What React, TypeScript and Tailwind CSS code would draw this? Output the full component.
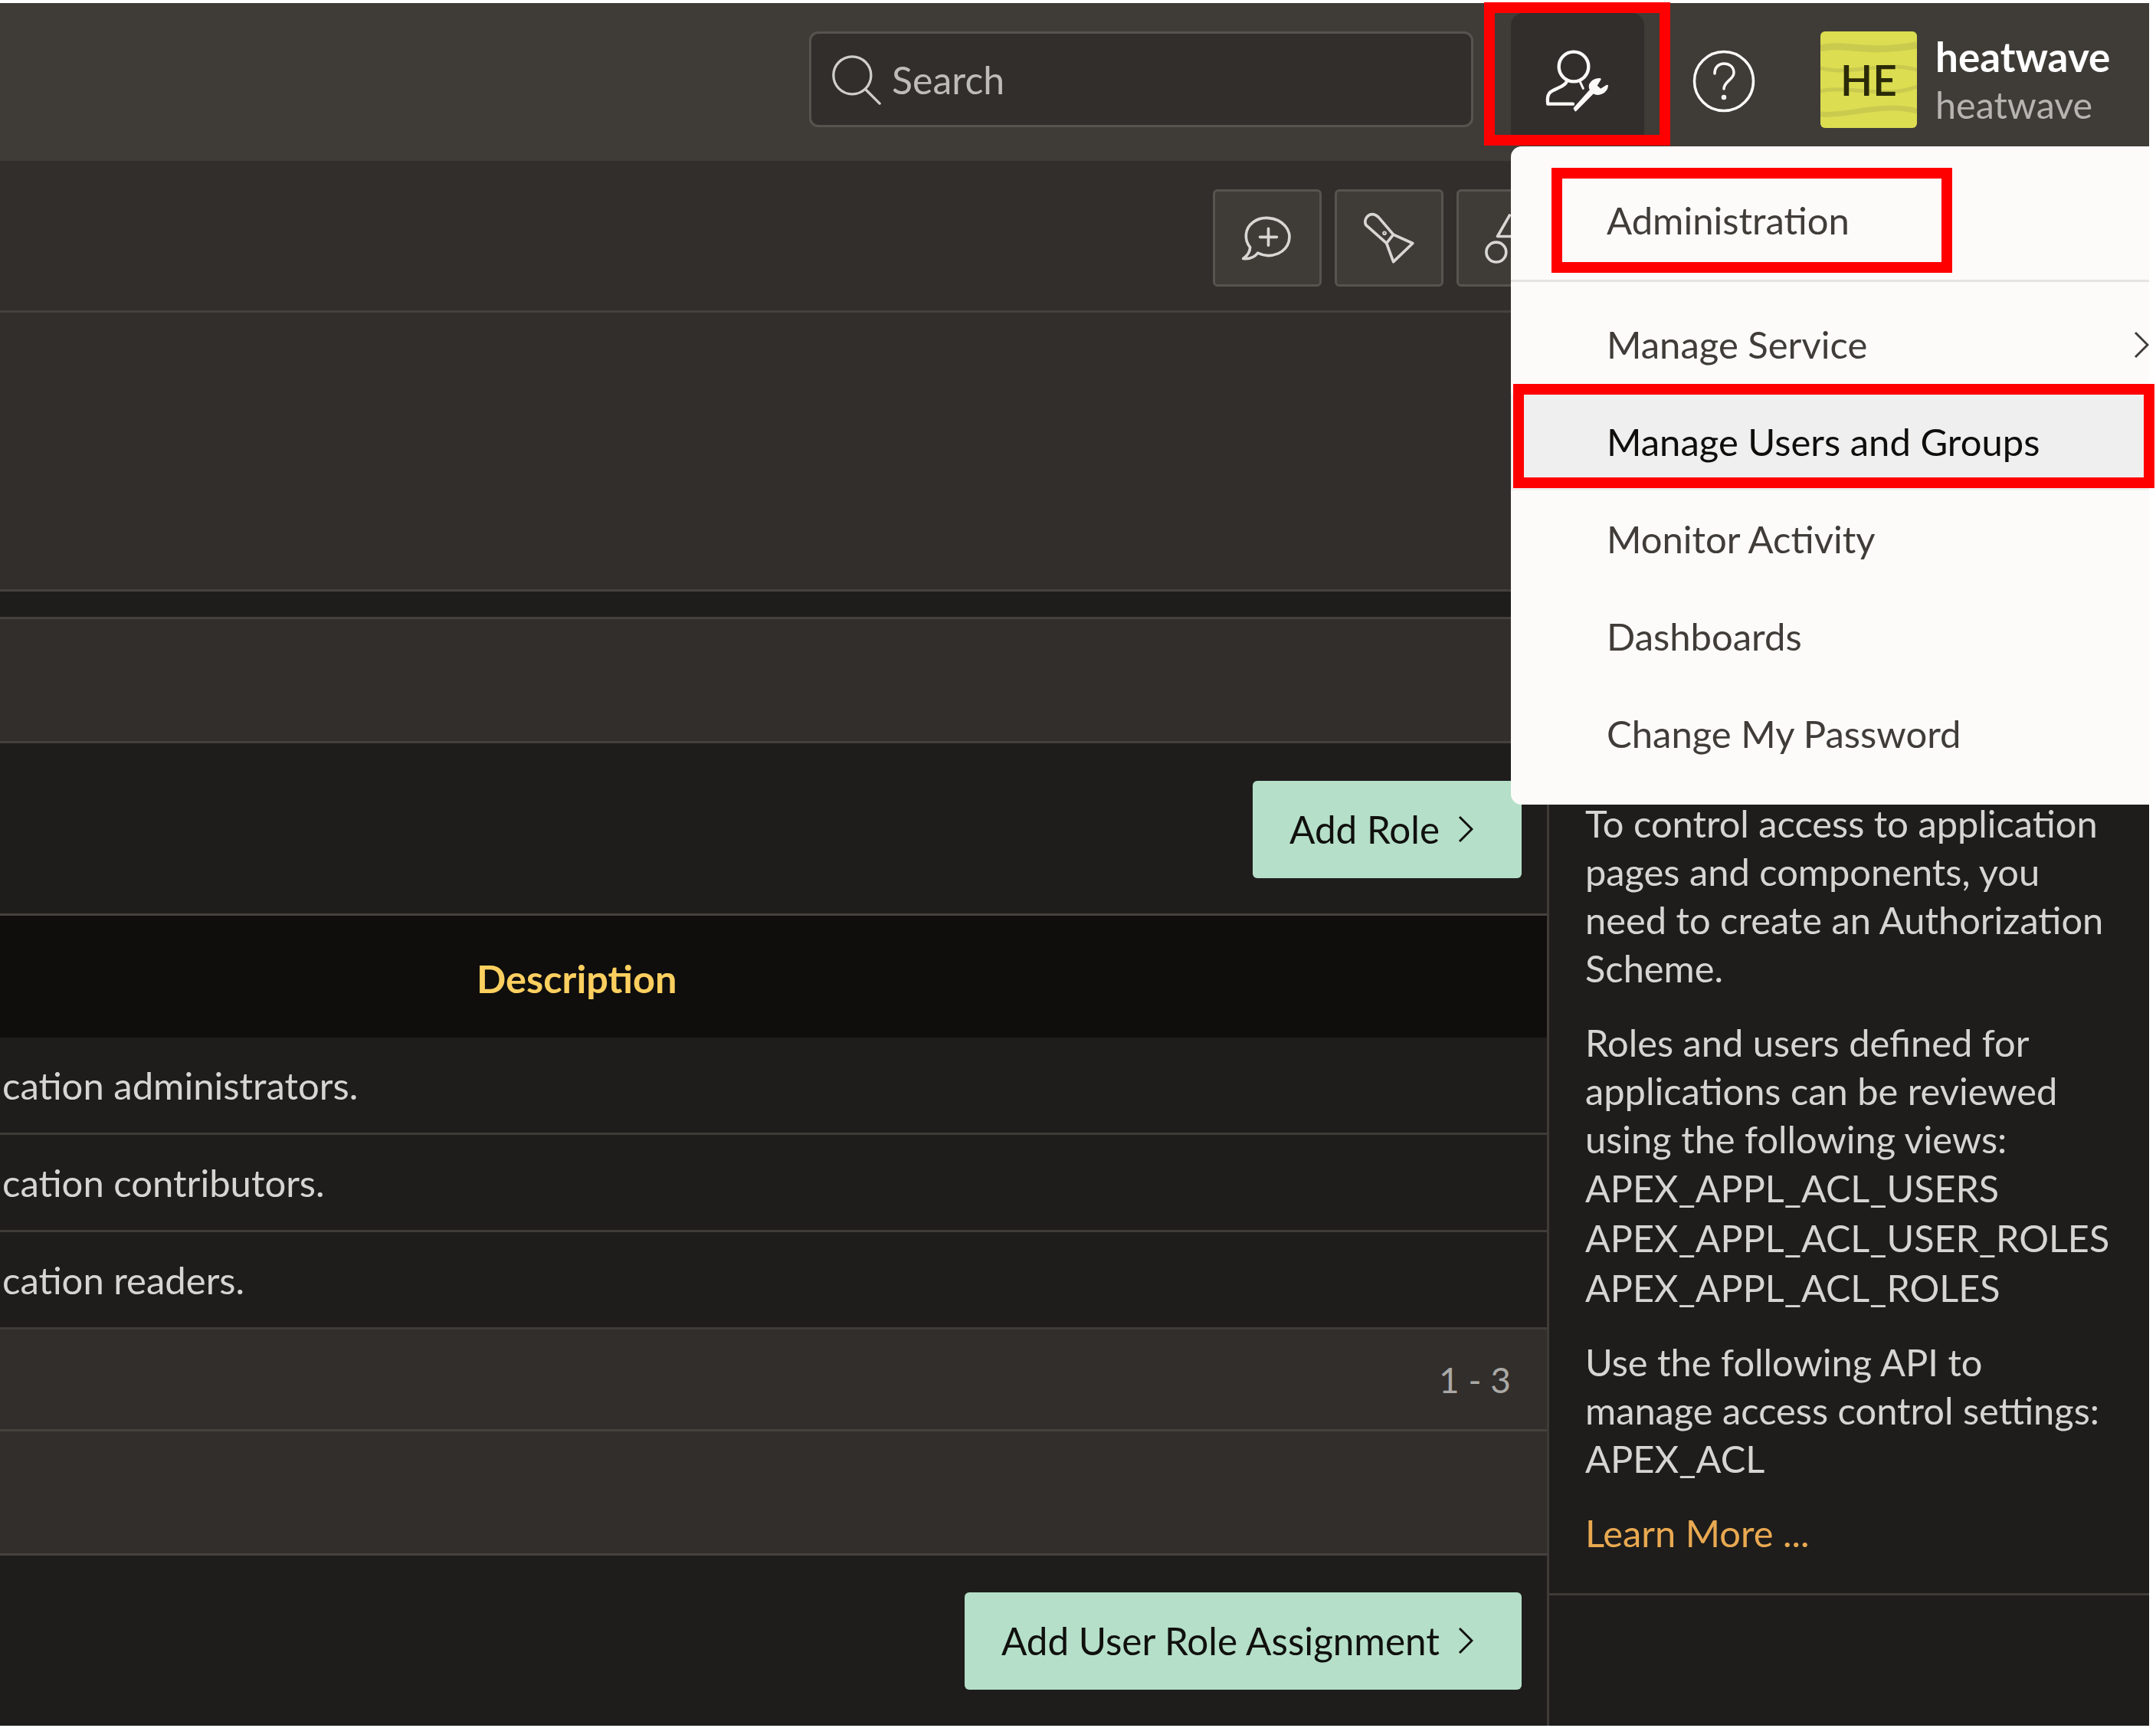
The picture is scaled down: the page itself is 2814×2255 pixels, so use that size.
const sans = "font-['Lato','Noto_Sans',sans-serif]";

function Chevron({ className }: { className: string }) {
  return (
    <svg viewBox="0 0 20 36" fill="none" stroke="currentColor" strokeWidth="3" className={className}>
      <path d="M2 2 L18 18 L2 34" />
    </svg>
  );
}

function UserWrench() {
  return (
    <svg viewBox="195 125 270 270" className="w-[90px] h-[90px]" fill="none" stroke="#fbfaf8" strokeWidth="13" strokeLinecap="round" strokeLinejoin="round">
      <circle cx="315" cy="197" r="58" />
      <path d="M288 254 C282 275 238 284 222 298 C212 308 212 330 214 343 L312 343" />
      <path d="M338 252 L352 282" strokeWidth="9" />
      <path d="M322 368 L392 298 C412 312 442 298 446 272 L420 288 L402 272 L418 246 C388 246 370 268 382 288 L318 360 Z" fill="#fbfaf8" strokeWidth="8" />
    </svg>
  );
}

function Avatar() {
  return (
    <div className="relative w-[126px] h-[126px] rounded-md overflow-hidden bg-[#dcdd51] flex items-center justify-center">
      <svg viewBox="0 0 126 126" className="absolute inset-0 w-full h-full" fill="none" stroke="#cacb4e" strokeWidth="9">
        <path d="M0 22 C30 14 60 30 126 18" />
        <path d="M0 48 C40 58 80 38 126 50" strokeWidth="5" />
        <path d="M0 78 C30 70 90 88 126 72" strokeWidth="5" />
        <path d="M0 108 C30 112 80 92 126 104" strokeWidth="7" />
      </svg>
      <span className="relative text-[55px] leading-none font-semibold text-[#2b2a08]">HE</span>
    </div>
  );
}

function ToolButton({ children }: { children: React.ReactNode }) {
  return (
    <div className="w-[142px] h-[127px] shrink-0 rounded-md border-[3px] border-[#57544f] bg-[#3f3c37] flex items-center justify-center">
      {children}
    </div>
  );
}

function GreenButton({ label }: { label: string }) {
  return (
    <div className="h-[127px] pl-[48px] pr-[63px] rounded-md bg-[#b5dfc8] flex items-center gap-[24px] text-[49.4px] text-[#10100e] whitespace-nowrap">
      <span>{label}</span>
      <Chevron className="w-[20px] h-[36px]" />
    </div>
  );
}

function MenuItem({ label, active, arrow }: { label: string; active?: boolean; arrow?: boolean }) {
  return (
    <div className={`relative h-[127px] pl-[125px] flex items-center text-[49px] ${active ? "bg-[#efefef] text-[#0f0e0d]" : "text-[#403d39]"}`}>
      {label}
      {arrow && <Chevron className="absolute right-0 top-[46px] w-[20px] h-[36px]" />}
    </div>
  );
}

function Row({ text }: { text: string }) {
  return (
    <div className="h-[127px] border-b-[3px] border-[#3f3c38] pl-[3px] pt-[2px] flex items-center text-[#d6d5d2] text-[49px]">{text}</div>
  );
}

export default function App() {
  return (
    <div className={`relative w-[2814px] h-[2255px] bg-white overflow-hidden pt-[4px] ${sans}`}>
      <div className="w-[2805px] h-[2248px] bg-[#1e1d1c] flex flex-col">
        {/* Header */}
        <header className="h-[206px] shrink-0 bg-[#3f3c37] flex items-start">
          <div className="ml-[1056px] mt-[37px] w-[867px] h-[125px] rounded-xl border-[3px] border-[#57544f] bg-[#312e2b] flex items-center pl-[26px] gap-[13px]">
            <svg viewBox="0 0 70 70" className="w-[66px] h-[66px]" fill="none" stroke="#cfcecb" strokeWidth="3.5" strokeLinecap="round">
              <circle cx="29" cy="29" r="26" />
              <path d="M47 48 L67 68" />
            </svg>
            <span className="text-[50px] text-[#bdbcb9] pt-[2px]">Search</span>
          </div>
          <div className="ml-[49px] mt-[13px] w-[174px] h-[160px] rounded-t-[16px] bg-[#312e2b] flex items-start justify-center pt-[46px]">
            <UserWrench />
          </div>
          <div className="ml-[63px] mt-[61px]">
            <svg viewBox="0 0 82 82" className="w-[82px] h-[82px]" fill="none" stroke="#fbfaf8" strokeWidth="3.5" strokeLinecap="round">
              <circle cx="41" cy="41" r="38.5" />
              <path d="M29 31 C29 22 35 18 41 18 C48 18 54 22 54 30 C54 39 41 41 41 51" />
              <circle cx="41" cy="62" r="1.5" />
            </svg>
          </div>
          <div className="ml-[85px] mt-[37px]">
            <Avatar />
          </div>
          <div className="ml-[24px] mt-[39px] flex flex-col">
            <span className="text-[53px] leading-[62px] font-bold text-white">heatwave</span>
            <span className="text-[48.5px] leading-[62px] text-[#b5b4b1]">heatwave</span>
          </div>
        </header>

        {/* Toolbar */}
        <div className="h-[198px] shrink-0 bg-[#312e2b] border-b-[3px] border-[#45423e] pl-[1583px] pt-[37px] flex items-start gap-[17px]">
          <ToolButton>
            <svg viewBox="180 150 205 180" className="w-[68px] h-[60px]" fill="none" stroke="#d8d7d4" strokeWidth="11" strokeLinecap="round" strokeLinejoin="round">
              <path d="M215 275 C190 245 195 200 225 178 C260 150 320 155 352 190 C385 228 370 280 325 300 C295 312 265 308 245 298 C232 315 210 322 188 320 C205 308 215 292 215 275 Z" />
              <path d="M287 202 L287 268 M254 235 L320 235" />
            </svg>
          </ToolButton>
          <ToolButton>
            <svg viewBox="650 140 210 205" className="w-[70px] h-[68px]" fill="none" stroke="#d8d7d4" strokeWidth="11" strokeLinecap="round" strokeLinejoin="round">
              <path d="M664 190 C655 172 668 148 690 148 C700 148 708 155 714 160 L772 228 L745 262 Z" />
              <path d="M772 228 L848 262 L772 335 L745 262" />
              <circle cx="737" cy="222" r="3" />
            </svg>
          </ToolButton>
          <ToolButton>
            <svg viewBox="1125 140 125 205" className="w-[42px] h-[68px] mr-[30px]" fill="none" stroke="#d8d7d4" strokeWidth="11" strokeLinejoin="round">
              <path d="M1230 148 L1180 235 L1250 235" />
              <circle cx="1175" cy="297" r="39" />
            </svg>
          </ToolButton>
        </div>

        {/* Upper sections */}
        <div className="h-[364px] shrink-0 bg-[#312e2b] border-b-[3px] border-[#45423e]" />
        <div className="h-[33px] shrink-0 bg-[#1e1d1c]" />
        <div className="h-[165px] shrink-0 bg-[#312e2b] border-y-[3px] border-[#45423e]" />

        {/* Lower split */}
        <div className="flex flex-1 min-h-0">
          <main className="w-[2019px] shrink-0 flex flex-col">
            <div className="h-[225px] border-b-[3px] border-[#45423e] flex items-center justify-end pr-[33px] pt-[2px]">
              <GreenButton label="Add Role" />
            </div>
            <div className="h-[159px] bg-[#0f0e0d] pl-[622px] pt-[4px] flex items-center text-[50.5px] font-bold text-[#fdcf5f]">Description</div>
            <Row text="cation administrators." />
            <Row text="cation contributors." />
            <Row text="cation readers." />
            <div className="h-[133px] bg-[#312e2b] border-b-[3px] border-[#45423e] flex items-center justify-end pr-[47px] text-[46px] text-[#aaa9a6]">1 - 3</div>
            <div className="h-[162px] bg-[#312e2b] border-b-[3px] border-[#45423e]" />
            <div className="flex-1 flex items-center justify-end pr-[33px]">
              <GreenButton label="Add User Role Assignment" />
            </div>
          </main>
          <aside className="flex-1 border-l-[3px] border-[#3f3c38]">
            <div className="pl-[47px] pt-[73px] pb-[47px] border-b-[3px] border-[#3f3c38] text-[48.8px] leading-[63px] text-[#d6d5d2] whitespace-nowrap">
              <p>To control access to application<br />pages and components, you<br />need to create an Authorization<br />Scheme.</p>
              <p className="mt-[34px]">Roles and users defined for<br />applications can be reviewed<br />using the following views:</p>
              <div className="leading-[65px] text-[48.5px]">
                <div>APEX_APPL_ACL_USERS</div>
                <div>APEX_APPL_ACL_USER_ROLES</div>
                <div>APEX_APPL_ACL_ROLES</div>
              </div>
              <p className="mt-[33px]">Use the following API to<br />manage access control settings:<br />APEX_ACL</p>
              <p className="mt-[34px] text-[#e9a951]">Learn More ...</p>
            </div>
          </aside>
        </div>
      </div>

      {/* Open dropdown menu */}
      <div className="absolute left-[1972px] top-[191px] w-[833px] h-[859px] rounded-l-[14px] bg-[#fcfbfa] overflow-hidden pt-[33px]">
        <MenuItem label="Administration" />
        <div className="mt-[14px] mb-[18px] h-[3px] bg-[#e5e4e2]" />
        <MenuItem label="Manage Service" arrow />
        <MenuItem label="Manage Users and Groups" active />
        <MenuItem label="Monitor Activity" />
        <MenuItem label="Dashboards" />
        <MenuItem label="Change My Password" />
      </div>

      {/* Red annotation boxes */}
      <div className="absolute left-[1937px] top-[3px] w-[243px] h-[187px] border-[14px] border-[#ff0000]" />
      <div className="absolute left-[2025px] top-[219px] w-[523px] h-[137px] border-[14px] border-[#ff0000]" />
      <div className="absolute left-[1975px] top-[501px] w-[837px] h-[136px] border-[14px] border-[#ff0000]" />
    </div>
  );
}
